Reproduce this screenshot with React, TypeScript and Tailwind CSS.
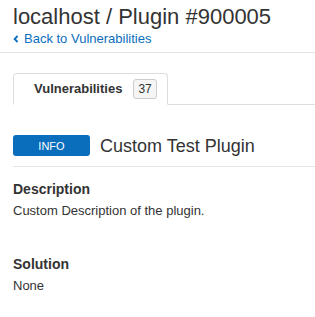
export default function App() {
  return (
    <div className="min-h-[317px] bg-white text-[#333] font-['Liberation_Sans',Arial,sans-serif]">
      {/* Header */}
      <div className="border-b border-[#e5e5e5] px-[13px] pt-[5px] pb-[4px]">
        <h1 className="text-[22px] leading-[24px] font-normal whitespace-nowrap">
          localhost / Plugin #900005
        </h1>
        <a href="#" className="mt-[1px] flex items-center text-[13px] leading-[18px] text-[#0a6ebd]">
          <svg width="6" height="8" viewBox="0 0 6 8" className="mr-[5px]">
            <path d="M4.6 1 L1.6 4 L4.6 7" fill="none" stroke="currentColor" strokeWidth="1.8" />
          </svg>
          Back to Vulnerabilities
        </a>
      </div>

      {/* Tabs */}
      <div className="ml-[13px] mt-[20px] flex border-b border-[#ddd]">
        <div className="-mb-px flex h-[32px] items-center rounded-t-[4px] border border-[#ddd] border-b-white bg-white pl-[20px] pr-[10px]">
          <span className="text-[13px] leading-[18px] font-bold">Vulnerabilities</span>
          <span className="ml-[11px] flex h-[20px] items-center rounded-[3px] border border-[#ccc] bg-[#f5f5f5] px-[4px] text-[12px] leading-[14px]">
            37
          </span>
        </div>
      </div>

      {/* Plugin */}
      <div className="pl-[13px] pt-[30px]">
        <div className="flex items-center gap-[10px] border-b border-[#e5e5e5] pb-[10px]">
          <span className="flex h-[21px] w-[77px] items-center justify-center rounded-[3px] bg-[#0a6ebd] text-[11px] leading-[14px] text-white">
            INFO
          </span>
          <span className="text-[18px] leading-[20px] whitespace-nowrap">Custom Test Plugin</span>
        </div>

        <h2 className="mt-[12px] text-[14px] leading-[20px] font-bold">Description</h2>
        <p className="mt-[3px] text-[13px] leading-[18px]">Custom Description of the plugin.</p>

        <h2 className="mt-[34px] text-[14px] leading-[20px] font-bold">Solution</h2>
        <p className="mt-[3px] text-[13px] leading-[18px]">None</p>
      </div>
    </div>
  );
}
